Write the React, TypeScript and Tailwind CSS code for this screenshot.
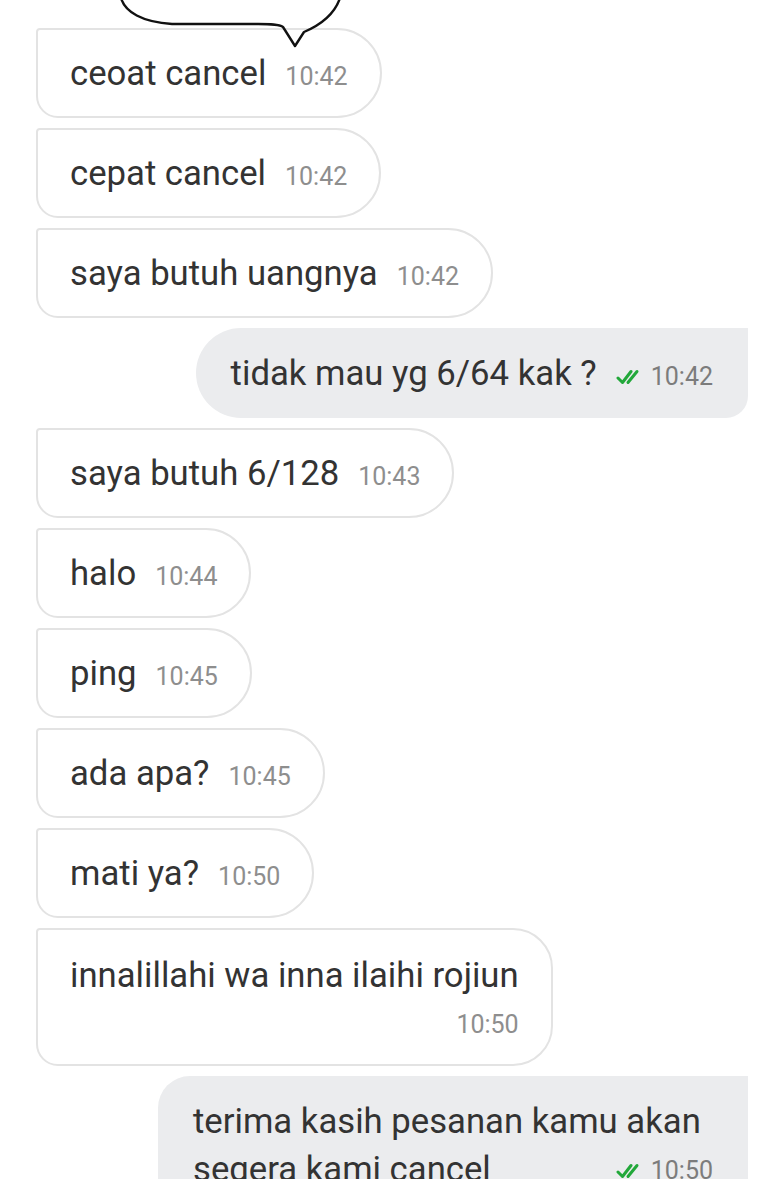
import React from "react";

type Msg = {
  id: number;
  text: string;
  time: string;
  mine?: boolean;
  layout?: "inline" | "stacked" | "wrap";
};

const messages: Msg[] = [
  { id: 1, text: "ceoat cancel", time: "10:42" },
  { id: 2, text: "cepat cancel", time: "10:42" },
  { id: 3, text: "saya butuh uangnya", time: "10:42" },
  { id: 4, text: "tidak mau yg 6/64 kak ?", time: "10:42", mine: true },
  { id: 5, text: "saya butuh 6/128", time: "10:43" },
  { id: 6, text: "halo", time: "10:44" },
  { id: 7, text: "ping", time: "10:45" },
  { id: 8, text: "ada apa?", time: "10:45" },
  { id: 9, text: "mati ya?", time: "10:50" },
  { id: 10, text: "innalillahi wa inna ilaihi rojiun", time: "10:50", layout: "stacked" },
  { id: 11, text: "terima kasih pesanan kamu akan segera kami cancel", time: "10:50", mine: true, layout: "wrap" },
];

function ReadTicks() {
  return (
    <svg width="26" height="16" viewBox="0 0 26 16" fill="none" className="shrink-0">
      <path d="M2 9 L6.5 13.5 L15 2.5" stroke="#22a83a" strokeWidth="3" strokeLinecap="round" strokeLinejoin="round" />
      <path d="M12 13.5 L21 2.5" stroke="#22a83a" strokeWidth="3" strokeLinecap="round" />
    </svg>
  );
}

function Meta({ msg }: { msg: Msg }) {
  return (
    <span className={`flex items-center gap-[9px] text-[25px] leading-[32px] ${msg.mine ? "text-[#7c7c7c]" : "text-[#8e8e8e]"}`}>
      {msg.mine && <ReadTicks />}
      {msg.time}
    </span>
  );
}

function Bubble({ msg }: { msg: Msg }) {
  const shape = msg.mine
    ? msg.layout === "wrap"
      ? "bg-[#ebecee] rounded-tl-[32px] rounded-bl-[32px] rounded-br-[22px]"
      : "bg-[#ebecee] rounded-l-[45px] rounded-br-[22px]"
    : msg.layout === "stacked"
      ? "bg-white border-2 border-[#e3e3e3] rounded-tl-[4px] rounded-bl-[22px] rounded-r-[40px]"
      : "bg-white border-2 border-[#e3e3e3] rounded-tl-[4px] rounded-bl-[22px] rounded-r-[45px]";

  if (msg.layout === "stacked") {
    return (
      <div className={`${shape} px-[32px] pt-[24px] pb-[23px]`}>
        <div className="text-[34.7px] leading-[42px] text-[#333333]">{msg.text}</div>
        <div className="flex justify-end mt-[13px]">
          <Meta msg={msg} />
        </div>
      </div>
    );
  }

  if (msg.layout === "wrap") {
    return (
      <div className={`${shape} max-w-[590px] px-[35px] py-[21px]`}>
        <p className="text-[34.7px] leading-[48px] text-[#333333]">
          {msg.text}
          <span className="float-right ml-5 pt-[10px]">
            <Meta msg={msg} />
          </span>
        </p>
      </div>
    );
  }

  return (
    <div className={`${shape} flex items-baseline gap-[19px] ${msg.mine ? "px-[35px] py-[24px]" : "px-[32px] py-[22px]"}`}>
      <span className="text-[34.7px] leading-[42px] text-[#333333]">{msg.text}</span>
      <Meta msg={msg} />
    </div>
  );
}

export default function App() {
  return (
    <div className="w-[783px] h-[1200px] bg-white" style={{ fontFamily: "Roboto, 'Noto Sans', sans-serif" }}>
      <div className="relative h-[1179px] overflow-hidden">
        <div className="flex flex-col gap-[10px] pt-[28px] pl-[36px] pr-[35px]">
          {messages.map((m) => (
            <div key={m.id} className={`flex ${m.mine ? "justify-end" : "justify-start"}`}>
              <Bubble msg={m} />
            </div>
          ))}
        </div>
        {/* hand-drawn speech bubble sticking in from the top */}
        <svg className="absolute left-0 top-0" width="360" height="52" viewBox="0 0 360 52" fill="none">
          <path
            d="M121 -2 C125 12 142 22 172 24 L258 24 C270 24 279 24 283 27 L295 46 L304 32 C318 26 334 16 340 -2"
            stroke="#111"
            strokeWidth="2.4"
            strokeLinejoin="round"
            strokeLinecap="round"
          />
        </svg>
      </div>
    </div>
  );
}
